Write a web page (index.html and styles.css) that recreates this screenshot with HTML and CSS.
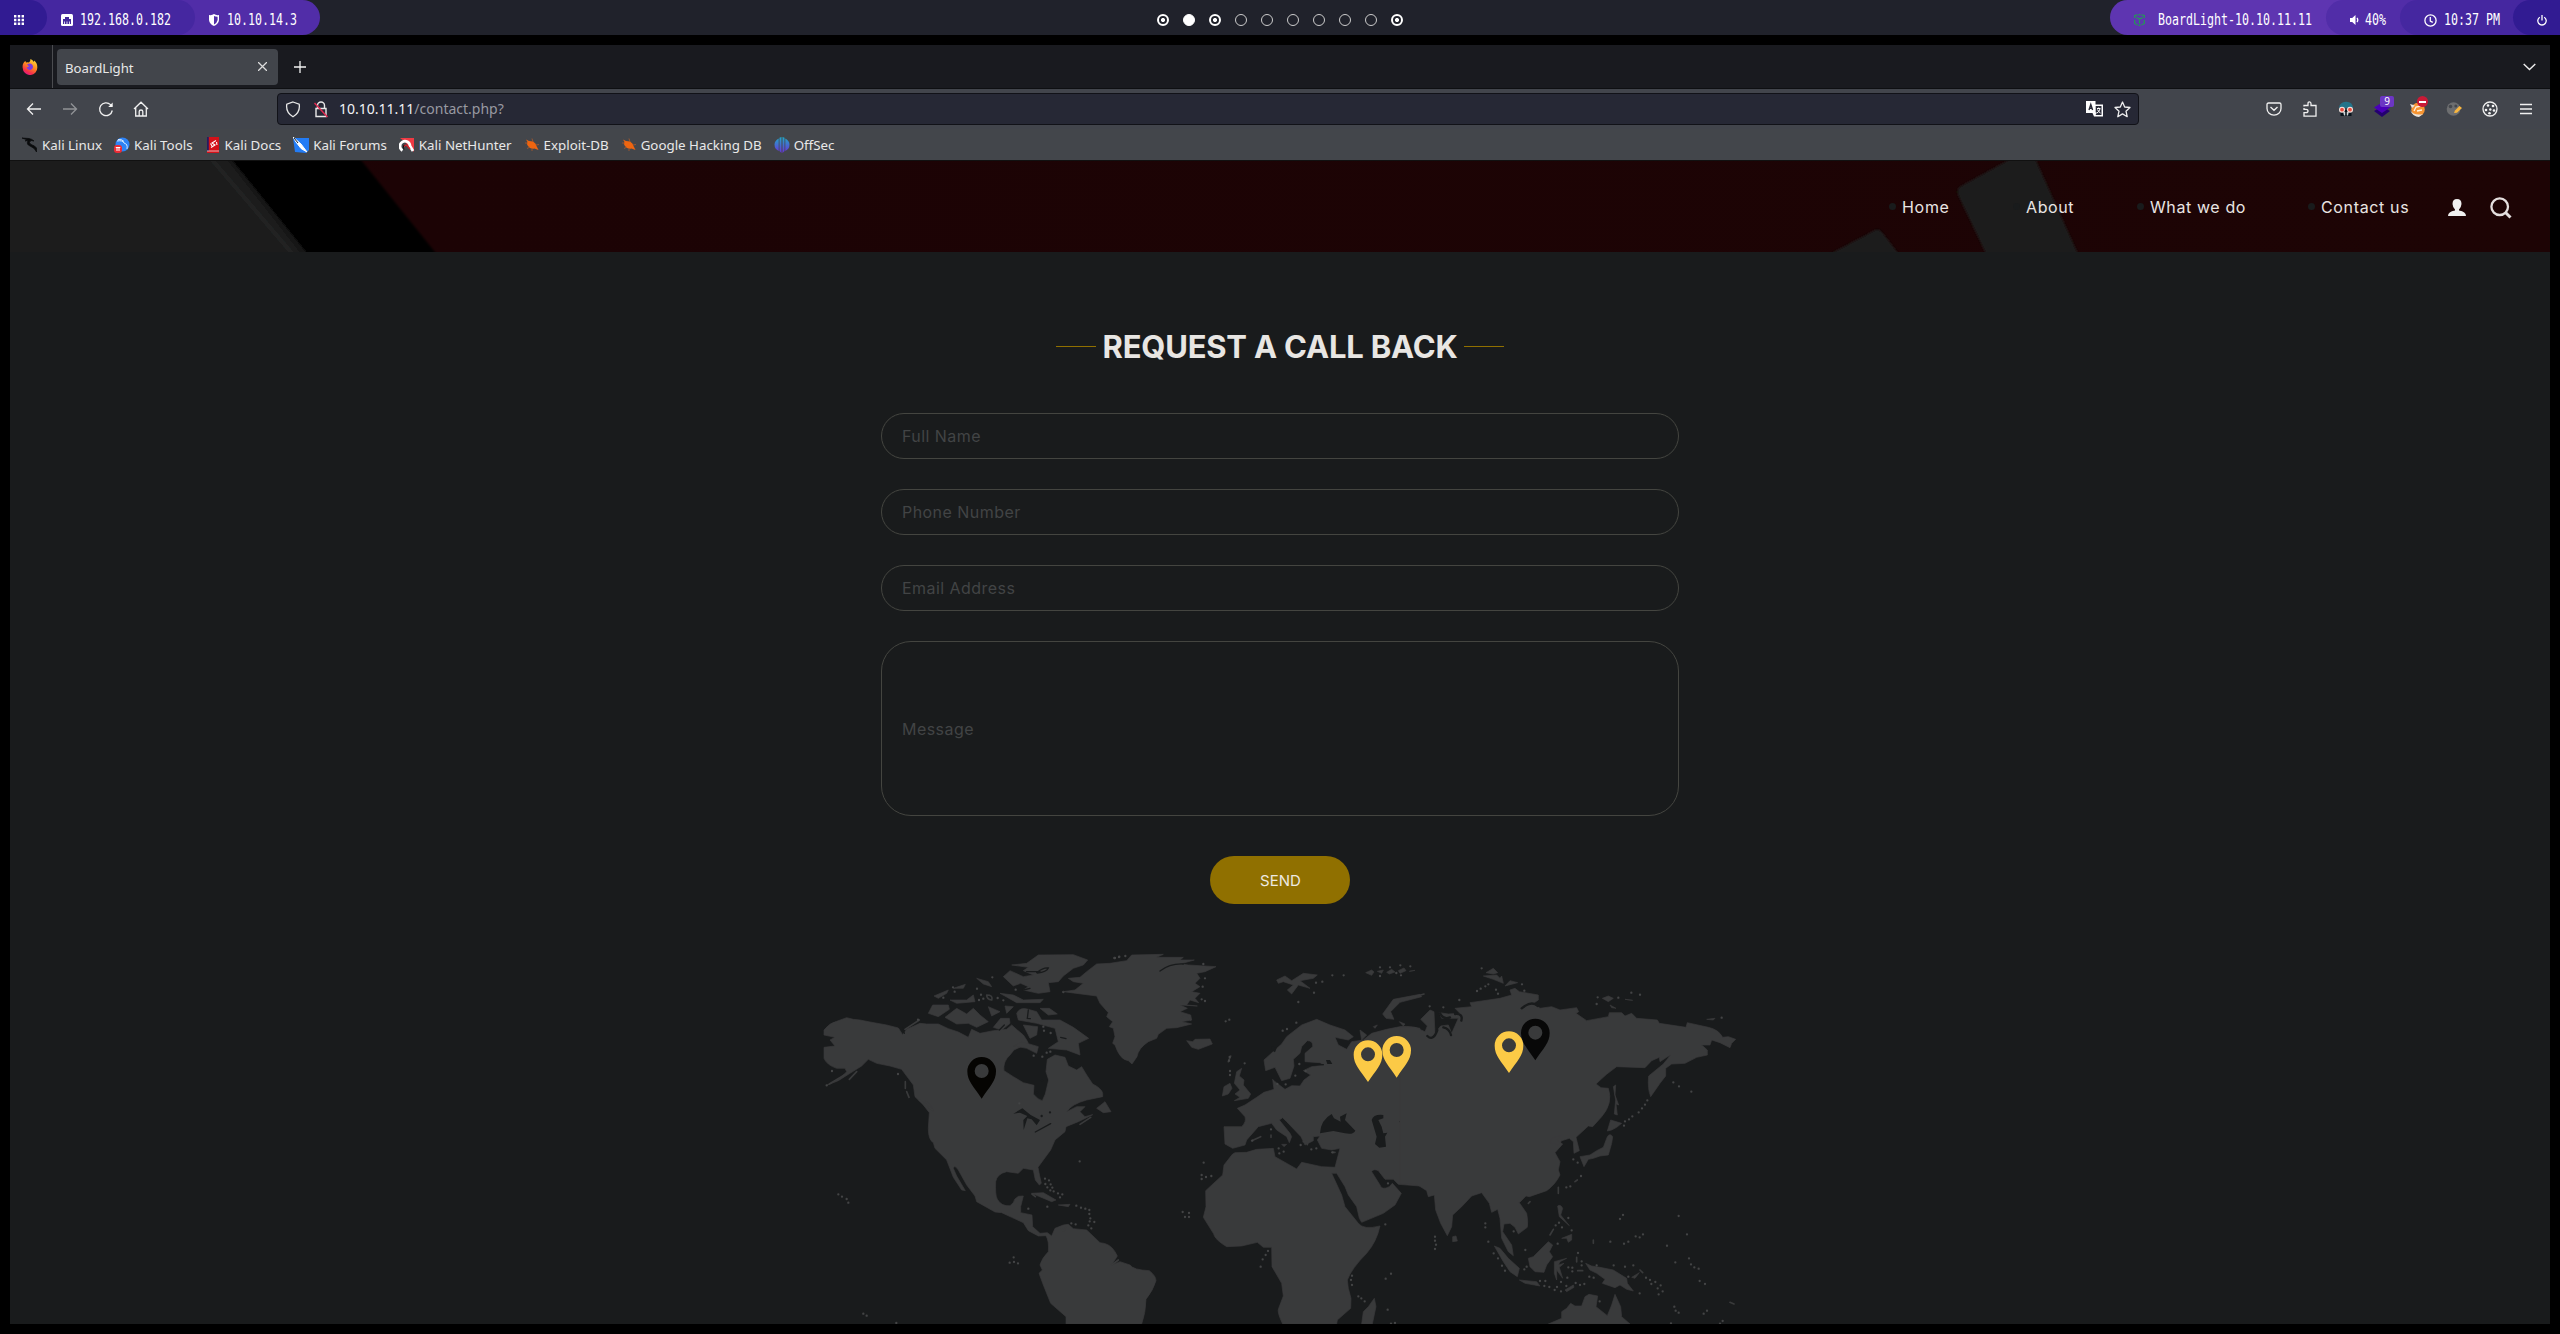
FILE: index.html
```html
<!DOCTYPE html>
<html lang="en">
<head>
<meta charset="utf-8">
<title>BoardLight</title>
<link rel="stylesheet" href="styles.css">
</head>
<body>
<header class="bar">
  <div class="bar-group bar-left">
    <div class="seg seg-apps"><svg width="10" height="10" viewBox="0 0 10 10" fill="#fff"><path d="M0 0h2.4v2.4H0zM3.8 0h2.4v2.4H3.8zM7.6 0H10v2.4H7.6zM0 3.8h2.4v2.4H0zM3.8 3.8h2.4v2.4H3.8zM7.6 3.8H10v2.4H7.6zM0 7.6h2.4V10H0zM3.8 7.6h2.4V10H3.8zM7.6 7.6H10V10H7.6z"/></svg></div>
    <div class="seg seg-lan">
      <svg width="12" height="12" viewBox="0 0 12 12"><rect width="12" height="12" rx="1.5" fill="#fff"/><path d="M2 10V5h2V3h4v2h2v5H8.800V7.500H8V10H6.400V7.500H5.600V10H4V7.500H3.200V10z" fill="#43289b"/></svg>
      <svg class="mono" width="92" height="20"><text x="0" y="15" textLength="91" lengthAdjust="spacingAndGlyphs">192.168.0.182</text></svg>
    </div>
    <div class="seg seg-vpn">
      <svg width="10" height="12" viewBox="0 0 10 12"><path d="M0 1Q3 1.500 5 0Q7 1.500 10 1V6Q9.500 10 5 12Q.5 10 0 6z" fill="#fff"/><path d="M5 2Q6.500 2.800 8.600 2.700V6Q8 9 5 10.500z" fill="#512da8"/></svg>
      <svg class="mono" width="70" height="20"><text x="0" y="15" textLength="70" lengthAdjust="spacingAndGlyphs">10.10.14.3</text></svg>
    </div>
  </div>
  <div class="desks">
    <i class="desk busy"></i><i class="desk active"></i><i class="desk busy"></i><i class="desk"></i><i class="desk"></i><i class="desk"></i><i class="desk"></i><i class="desk"></i><i class="desk"></i><i class="desk busy"></i>
  </div>
  <div class="bar-group bar-right">
    <div class="seg seg-target">
      <svg width="11" height="12" viewBox="0 0 11 12" fill="none" stroke="#229a55" stroke-width="1.200"><path d="M.7 4V1.500L3.500.8M7.500.8L10.300 1.500V4M.7 6V9.500L3.500 11M10.300 6V9.500L7.500 11M4.500 11.300H6.500M2.300 3.500L5.500 5 8.700 3.500M5.500 5V9.500M4.500.7H6.500"/></svg>
      <svg class="mono" width="154" height="20"><text x="0" y="15" textLength="154" lengthAdjust="spacingAndGlyphs">BoardLight-10.10.11.11</text></svg>
    </div>
    <div class="seg seg-vol">
      <svg width="9" height="10" viewBox="0 0 9 10"><path d="M0 3h2.200L5.500 0v10L2.200 7H0z" fill="#fff"/><path d="M7 3q1.500 2 0 4" fill="none" stroke="#fff" stroke-width="1.300"/></svg>
      <svg class="mono" width="21" height="20"><text x="0" y="15" textLength="21" lengthAdjust="spacingAndGlyphs">40%</text></svg>
    </div>
    <div class="seg seg-clock">
      <svg width="13" height="13" viewBox="0 0 13 13" fill="none" stroke="#fff" stroke-width="1.300"><circle cx="6.500" cy="6.500" r="5.600"/><path d="M6.300 3v4l2.500 1.300"/></svg>
      <svg class="mono" width="56" height="20"><text x="0" y="15" textLength="56" lengthAdjust="spacingAndGlyphs">10:37 PM</text></svg>
    </div>
    <div class="seg seg-power"><svg width="10" height="11" viewBox="0 0 10 11" fill="none" stroke="#fff" stroke-width="1.300"><path d="M2.800 2.200a4.200 4.200 0 1 0 4.400 0M5 0v5.500"/></svg></div>
  </div>
</header>

<div class="window">
  <div class="tabs">
    <div class="pinned">
      <svg width="16" height="16" viewBox="0 0 16 16"><defs><linearGradient id="fox" x1=".8" y1="0" x2=".3" y2="1"><stop offset="0" stop-color="#ffe13a"/><stop offset=".45" stop-color="#ff8a1f"/><stop offset=".8" stop-color="#f5304a"/><stop offset="1" stop-color="#e31587"/></linearGradient></defs><path d="M1 5Q2 2.500 3.500 2L4 3.500Q6 3 7 3.500Q8.500 2.500 8.500 0Q11 1 11.700 3Q12 2 12 1.500Q15.500 4 15.300 8.500A7.300 7.300 0 0 1 .7 9Q.4 7 1 5z" fill="url(#fox)"/><path d="M5 5.500Q8 3.500 10.500 6Q12 9 9 10.800Q5.500 11.500 4.600 8.500L7 7.500z" fill="#7a3ae0"/></svg>
    </div>
    <div class="tab"><span>BoardLight</span><svg width="9" height="9" viewBox="0 0 8 8" stroke="#ddd" stroke-width="1.100"><path d="M0 0l8 8M8 0L0 8"/></svg></div>
    <svg class="newtab" width="12" height="12" viewBox="0 0 12 12" stroke="#f2f2f2" stroke-width="1.300"><path d="M6 0v12M0 6h12"/></svg>
    <svg class="alltabs" width="13" height="8" viewBox="0 0 13 8" fill="none" stroke="#eee" stroke-width="1.400"><path d="M.7 1l5.800 5.500L12.300 1"/></svg>
  </div>
  <div class="tools">
    <div class="nav-icons">
      <svg viewBox="0 0 16 16"><path d="M15 8H1.500M7 2.500L1.500 8 7 13.500"/></svg>
      <svg viewBox="0 0 16 16" class="dim"><path d="M1 8h13.500M9 2.500L14.500 8 9 13.500"/></svg>
      <svg viewBox="0 0 16 16"><path d="M14.300 9.500A6.400 6.400 0 1 1 12.500 3.600L14 5"/><path d="M14.700 1.500V6h-4.500z" fill="#f5f5f5" stroke="none"/></svg>
      <svg viewBox="0 0 16 16"><path d="M1 8L8 1.200 15 8M2.700 6.500V15H13.300V6.500M6.200 15V10.500Q6.200 9 8 9T9.800 10.500V15"/></svg>
    </div>
    <div class="url">
      <svg width="16" height="17" viewBox="0 0 16 17" fill="none" stroke="#e8e8e8" stroke-width="1.300"><path d="M8 1L14.200 3.200Q15.500 11.500 8 15.800Q.5 11.500 1.800 3.200z"/></svg>
      <svg class="lock" width="14" height="17" viewBox="0 0 14 17" fill="none" stroke="#e8e8e8" stroke-width="1.400"><path d="M3.500 7V4.500a3.500 3.500 0 0 1 7 0V7M2 7.500H12V15.500H2z"/><path d="M.5 2L13.500 16" stroke="#e22850" stroke-width="1.500"/></svg>
      <span class="address">10.10.11.11<span class="path">/contact.php?</span></span>
      <svg width="18" height="16" viewBox="0 0 18 16"><path d="M0 0H9.500V3.500H17V15.500H8L6.500 12H0z" fill="#fff"/><path d="M9.700 5H15.500V14H9.500L11 11.500H9.700z" fill="#272936"/><path d="M3 9L4.800 3.500 6.600 9M3.600 7.300H6" fill="none" stroke="#272936" stroke-width="1.400"/><path d="M11 7.500H14.500M12.700 6.500V7.500M14 8Q13 11 11 12M11.500 8.500Q12.500 11 14.500 12" fill="none" stroke="#fff"/></svg>
      <svg class="star" width="17" height="17" viewBox="0 0 17 17" fill="none" stroke="#eee" stroke-width="1.300" stroke-linejoin="round"><path d="M8.500 1L10.700 6 16 6.500 12 10.200 13.200 15.700 8.500 12.900 3.800 15.700 5 10.200 1 6.500 6.300 6z"/></svg>
    </div>
    <div class="addons">
      <svg viewBox="0 0 16 16"><path d="M2.500 2H13.500Q15 2 15 3.500V7.500A7 6.700 0 0 1 1 7.500V3.500Q1 2 2.500 2zM4.500 6L8 9.300 11.500 6"/></svg>
      <svg viewBox="0 0 16 16"><path d="M2 5.500V4.500H6V2.700Q6 .8 7.500 .8T9 2.700V4.500H14V15.200H2V11.700H4Q6 11.700 6 10T4 8.300H2V7"/></svg>
      <svg viewBox="0 0 16 16"><g stroke="none"><path d="M1 7Q1.500 1 8 .8T15 7z" fill="#24748a"/><path d="M2.500 9H13.500V15H2.500z" fill="#08131b"/><path d="M5.200 11H10.800L10 14.500H6z" fill="#cfd5d8"/><path d="M7.200 10H8.800V15H7.200z" fill="#10181e"/><circle cx="4" cy="8.700" r="3" fill="#f7e8e2"/><circle cx="12" cy="8.700" r="3" fill="#f7e8e2"/><circle cx="4" cy="8.700" r="1.900" fill="#e94d3e"/><circle cx="12" cy="8.700" r="1.900" fill="#e94d3e"/></g></svg>
      <div class="badged"><svg viewBox="0 0 16 16"><g stroke="none"><path d="M0 10L8 5.500 16 10 8 16z" fill="#240070"/><path d="M0 6.500L8 1.500 16 6.500 8 12z" fill="#4a00b8"/></g></svg><b class="count">9</b></div>
      <div class="badged"><svg viewBox="0 0 16 16"><g stroke="none"><circle cx="8" cy="8.500" r="6.800" fill="#f69432"/><path d="M0 3L5 4.500 2 7zM0 9Q4 15 13 13L9 16Q3 16 0 9z" fill="#e6e2dc"/></g><path d="M4 10L6 6 11 5M7 10L12 9" stroke="#fff2e0"/></svg><b class="blocked"></b></div>
      <svg viewBox="0 0 16 16"><g stroke="none"><circle cx="7.500" cy="8" r="6.800" fill="#6d6e70"/><circle cx="4.500" cy="5.500" r="1.800" fill="#45484d"/><circle cx="9.800" cy="5" r="1.500" fill="#45484d"/><path d="M8 12L9 9.500 13.500 5 16 7 11 11.700z" fill="#f9b63f"/></g></svg>
      <svg viewBox="0 0 16 16"><circle cx="8" cy="8" r="7"/><g stroke="none" fill="#f5f5f5"><circle cx="6" cy="4.500" r="1.300"/><circle cx="11" cy="5" r="1.300"/><circle cx="4" cy="9" r="1.300"/><circle cx="8.300" cy="8.500" r="1.200"/><circle cx="12" cy="9.500" r="1.300"/><circle cx="7.500" cy="12.300" r="1.300"/></g></svg>
      <svg viewBox="0 0 16 16"><path d="M2 3.500H14M2 8H14M2 12.500H14"/></svg>
    </div>
  </div>
  <nav class="bookmarks">
    <a><svg viewBox="0 0 16 16"><path d="M0 1L7 1.500Q10 2 12 4L9 3.500Q6 5.500 9 7.500Q13 8.500 14.500 11L14.500 15Q13 11 8 9Q4 7.500 6 3.500L3 4L5 2.800z" fill="#090a0b" stroke="#090a0b" stroke-width=".7"/></svg><span>Kali Linux</span></a>
    <a><svg viewBox="0 0 16 16"><circle cx="8.500" cy="7.500" r="7" fill="#2e83f5"/><path d="M3 4Q9 3 10 6Q14 7 13 12M4 2.500Q8 2 10 4.500" stroke="#d9ebff" fill="none"/><rect y="8" width="8" height="8" rx="3" fill="#ec2b35"/><path d="M1.800 10.500h4.500M3 10.500V14M5 10.500V14" stroke="#fff" fill="none"/></svg><span>Kali Tools</span></a>
    <a><svg viewBox="-2 0 16 16"><path d="M0 0H12V16H0z" fill="#d31119"/><path d="M0 0H1.800V14H0z" fill="#271b60"/><path d="M0 14H12" stroke="#f2d9d9" stroke-width=".8"/><path d="M9 3.500L5 6 8 8 4 10.500M3.500 6.500L5 9M9.500 5L10 8" fill="none" stroke="#fff" stroke-width="1.100"/></svg><span>Kali Docs</span></a>
    <a><svg viewBox="0 0 16 16"><path d="M0 1H16V13L13 16 2 15z" fill="#237cf5"/><path d="M0 0L8 7 14 15 8 11.500 3 5z" fill="#fff" stroke="#fff"/><path d="M1 1L5 6" stroke="#17212d"/></svg><span>Kali Forums</span></a>
    <a><svg viewBox="0 0 16 16"><path d="M1 1H15V15L5 4z" fill="#f03a43"/><path d="M3.500 13.500A5 5 0 1 1 11 9L14 14" fill="none" stroke="#fff" stroke-width="2.800"/><path d="M5 10Q5 7.500 8 8.500L11 12" fill="none" stroke="#d5202a" stroke-width="1.500"/><path d="M5 12.500Q3.500 10 5 8" fill="none" stroke="#111"/></svg><span>Kali NetHunter</span></a>
    <a><svg viewBox="0 0 16 16"><path d="M2 2.500L5 4 9 4.500Q12 6 12.500 9L14.500 13 10.500 11.500Q6 12.500 4 9Q2 6 3.500 5z" fill="#ee6510"/><path d="M1 6H4M8 1.500L9 5M12 8L15 7.500M3 11.500L6 10M8 14L8 11" stroke="#ad592a" stroke-width=".8"/></svg><span>Exploit-DB</span></a>
    <a><svg viewBox="0 0 16 16"><path d="M2 2.500L5 4 9 4.500Q12 6 12.500 9L14.500 13 10.500 11.500Q6 12.500 4 9Q2 6 3.500 5z" fill="#ee6510"/><path d="M1 6H4M8 1.500L9 5M12 8L15 7.500M3 11.500L6 10M8 14L8 11" stroke="#ad592a" stroke-width=".8"/></svg><span>Google Hacking DB</span></a>
    <a><svg viewBox="0 0 16 16"><defs><linearGradient id="off" gradientUnits="userSpaceOnUse" x1="0" y1="0" x2="0" y2="16"><stop offset="0" stop-color="#20a9c8"/><stop offset="1" stop-color="#6930d8"/></linearGradient></defs><path d="M7.500 0V16L5.500 14V.8zM8.500 0V16L10.500 14V.8zM4.700 1.500V14Q.5 12 .5 7.500Q.5 4 4.700 1.500zM11.300 1.500V14Q15.500 12 15.500 7.500Q15.500 4 11.300 1.500z" fill="url(#off)"/></svg><span>OffSec</span></a>
  </nav>

  <main class="page">
    <div class="hero">
      <svg class="hero-art" viewBox="10 161 2540 91" preserveAspectRatio="none">
        <defs><filter id="soft"><feGaussianBlur stdDeviation="1"/></filter><linearGradient id="red"><stop offset="0" stop-color="#210004"/><stop offset=".15" stop-color="#1c0305"/><stop offset="1" stop-color="#1d0405"/></linearGradient></defs>
        <path d="M10 161H2550V252H10z" fill="url(#red)"/>
        <g filter="url(#soft)"><path d="M0 150H353L443 262H0z" fill="#000"/><path d="M0 150H224L314 262H0z" fill="#1a1a1a"/><path d="M208 155L296 258" stroke="#202121" stroke-width="5"/><path d="M222 150L310 262" stroke="#141414" stroke-width="3"/>
        <path d="M2012 158H2035L2079 256H1987L1958 195Q1956 189 1961 186z" fill="#1d1e1d"/><path d="M1826 256L1875 230Q1879 228 1882 232L1902 258z" fill="#1d1e1d"/></g>
      </svg>
      <nav class="site-nav">
        <a class="n1">Home</a><a class="n2">About</a><a class="n3">What we do</a><a class="n4">Contact us</a>
        <svg class="user" width="18" height="17" viewBox="0 0 18 17"><path d="M9 0Q13.500 0 13.500 5Q13.200 8.500 11 10.500V11.500Q18 12.500 18 17H0Q0 12.500 7 11.500V10.500Q4.800 8.500 4.500 5Q4.500 0 9 0z" fill="#f0f0f0"/></svg>
        <svg class="search" width="22" height="22" viewBox="0 0 22 22" fill="none" stroke="#e4dfdf"><circle cx="9.700" cy="9.700" r="8.300" stroke-width="2.300"/><path d="M15.500 15.500L20.500 20.500" stroke-width="3"/></svg>
      </nav>
    </div>
    <section class="contact">
      <h2>REQUEST A CALL BACK</h2>
      <form class="form">
        <input type="text" placeholder="Full Name">
        <input type="text" placeholder="Phone Number">
        <input type="text" placeholder="Email Address">
        <input type="text" class="message" placeholder="Message">
        <button type="button">SEND</button>
      </form>
      <svg class="map" width="920" height="384" viewBox="820 940 920 384">
        <defs><path id="pin" fill-rule="evenodd" d="M0 0C-24 -36 -43 -53 -43 -82A43 43 0 0 1 43 -82C43 -53 24 -36 0 0zM0 -104A21 21 0 1 0 0 -62A21 21 0 1 0 0 -104z"/></defs>
        <g transform="translate(810 940) scale(.33333)">
          <g class="land">
            <path d="M42 270Q60 248 80 244L110 233 130 238 150 240 180 246 230 255 265 264 278 284 290 268 330 250 350 252 385 252 415 266 445 276 475 292 485 268 510 280 550 272 590 268 605 255 622 270 640 285 650 300 655 310 612 330 600 345 Q578 365 582 392L610 410 640 428 672 436 670 462 Q685 480 697 482L706 462 716 420 708 395 712 358 735 345 765 352 775 378 800 390 815 380 830 405 848 432Q875 445 878 460L878 470 830 480Q785 492 770 515L800 500 825 500 810 515 825 530 848 524 805 545 768 560 765 575 735 600 722 630 700 660 684 682Q688 705 694 730L688 735 676 720 670 690 640 685 625 700 590 695Q560 702 557 725Q555 765 562 778Q575 800 600 797Q612 790 614 778L625 769 640 768 632 800 632 818 666 825 668 860 690 880 712 878 725 888 735 865 760 855 775 853 790 866 830 870 870 908Q900 910 915 935L922 948 905 975 930 965 960 975Q970 990 1018 992Q1038 1008 1038 1022Q1030 1050 1008 1078Q1007 1120 995 1152H768V1130L722 1090 700 1035 687 1000 697 990 690 975Q695 955 715 935Q718 905 708 887L685 888 655 872 640 848 605 832 575 818 555 816 500 785 495 768 470 735 445 690Q432 672 430 685L440 708 466 752 455 750 430 712 410 660 375 625 370 608Q355 600 355 565L358 518 340 495 315 470 310 435 295 415 275 388 240 378 200 370 175 358 155 378 120 400 85 422 50 436 90 415 110 395 105 385 80 385Q50 375 42 355V322L75 318 60 300 75 292 42 285z"/>
            <path d="M605 75L650 70 685 45 790 44 833 60 820 75 790 85 760 108 745 125 715 128 720 155 685 160 640 150 655 140 632 130 610 138 580 110 600 92 640 110 670 105 640 92 655 82zM570 160L610 165 640 180 700 178 690 188 620 188zM372 168L415 150 410 160 385 175zM430 145L466 133 460 145zM500 115L535 125 545 140 520 132zM355 220L368 195 415 195 418 208 385 230zM405 232L440 205 470 222 490 205 510 225 535 245 500 262 475 250 440 252zM420 180L470 180 490 165 495 185 440 190zM535 200L570 215 545 228zM585 198L610 200 590 220zM572 235L598 235 600 250 575 270 550 262zM620 220Q630 200 655 208L680 215 695 240 750 240 790 262 836 295 805 310 810 345 770 330 715 325 745 305 735 265 680 250 625 240zM690 205L718 205 742 222 715 225zM640 255L683 260 680 285 660 295zM612 318L635 305 685 320 680 340 650 325zM665 760L700 758 738 780 725 785zM745 795L780 793 775 800zM860 505L885 485 903 515 880 518zM345 480L365 498 370 515 350 500z"/>
          </g>
          <g class="cut"><path d="M610 521L637 505 662 525 690 540 680 556 665 538 652 535 641 570 640 540 652 528 630 518z"/></g>
          <g class="cutline"><path d="M278 262L283 280M655 210L652 235 661 236M680 98Q700 82 715 84Q710 96 682 99M676 576L722 551M650 95H690M640 150L660 145M568 270L583 255M752 292L768 296"/></g>
          <g class="coast"><path d="M285 268L328 240M58 432L103 405M118 418L140 395M286 425V445M290 455L297 472M328 480L368 510M530 165Q550 165 545 180Q530 178 530 165M666 762L676 770M810 553L842 532M755 866Q762 880 766 862"/></g>
          <path class="dots" d="M66 393h0M50 436h0M264 402h0M324 239h0M628 490h0M809 664h0M85 763h0M96 770h0M110 777h0M115 788h0M599 968h0M611 952h0M612 966h0M624 970h0M160 1121h0M170 1127h0M259 1149h0M705 716h0M717 721h0M706 732h0M722 733h0M712 742h0M727 743h0M721 751h0M731 754h0M744 760h0M757 763h0M750 772h0M655 806h0M712 800h0M799 797h0M813 803h0M826 806h0M838 810h0M838 822h0M841 835h0M839 844h0M853 846h0M835 856h0M844 865h0M784 850h0M797 853h0M429 142h0M434 155h0M400 173h0M501 146h0M513 164h0M507 180h0M520 176h0M547 112h0M563 174h0M580 181h0M617 149h0M700 260h0M702 272h0M722 279h0M710 338h0M721 335h0M697 350h0M671 347h0M760 156h0M915 54h0M928 50h0M946 48h0"/>
          <path class="dots cutdots" d="M696 421h0M788 371h0M681 458h0M720 517h0M695 528h0"/>
        </g>
        <g transform="translate(1100 940) scale(.33333)">
          <g class="land">
            <path d="M-110 155L-75 150-50 130-80 125-95 115-60 112-40 95-10 72 30 70 80 62 95 45 190 43 170 52 250 52 240 60 283 60 240 72 265 75 348 80 315 95 290 100 300 115 285 130 300 140 275 155 300 160 285 175 296 188 270 180 260 195 292 198 240 195 262 205 240 215 272 225 275 240 245 245 275 252 230 263 200 265 175 283 170 295 145 305Q115 325 111 350L96 372 85 362Q60 360 45 315L38 310 45 290 40 265 28 260 38 245 20 230 25 218 0 190-10 168z"/>
            <path d="M260 302L278 305 285 298 330 297 337 312 295 328 275 322zM530 120L555 108 575 122 610 100 652 105 640 115 600 122 630 145 595 135 575 162 562 150 580 135 550 125 535 130zM848 222L880 178 960 163 965 170 900 187 872 215 882 238 858 235zM780 270L800 285 785 300zM820 260L832 255 825 265zM898 245L915 252 910 258zM410 395L425 385 418 408 432 420 430 435 452 462 445 475 403 482 420 472 405 462 420 450 403 430zM372 440L390 430 396 445 385 462 367 468zM545 613L560 613 552 620zM785 1152L790 1115 805 1100 823 1075 828 1100 817 1152zM797 98L815 90 822 96 815 106zM832 94L850 90 845 100zM860 97L875 88 885 96 868 102zM895 92L912 84 918 92 900 100zM928 94L945 91z"/>
            <path d="M412 505L435 495 470 472 492 457 522 448 518 418 525 425 555 448 575 437 600 438 612 420 632 405 610 392 635 380 672 375 660 368 615 365 615 340 638 320Q640 302 622 302L605 320 600 340 580 358 582 378 570 415 545 422 525 382 497 392 492 360 545 312 560 290 605 255 650 238 690 255 735 270 760 290 745 300 705 292 715 315 740 328 755 305 790 300 815 280 860 268 890 262Q915 255 960 265L960 738 895 733 880 718 855 718 835 692Q820 685 815 695L840 735Q845 752 868 740L877 730 904 760 885 795 850 820 785 847 778 835 770 800 745 765 735 740 710 700 695 700 725 765 735 800 775 850Q790 870 840 858Q830 905 800 940Q755 985 742 1020L745 1045 753 1075 752 1105 712 1140 710 1152H548Q530 1115 536 1105L550 1068 545 1030 516 980 515 922 490 922 472 907 425 918 380 920Q345 900 340 880L310 832 318 800 317 752 368 705 372 675 397 643 405 638 440 637 470 628 520 625 525 650 590 687 605 667 665 680 705 682 720 625 695 630 665 625 652 600 660 588 640 590 640 602 615 615 603 590 560 545 548 533 538 540 570 580 575 590 568 608 560 590 530 570 515 550 475 560 440 600 435 615 398 625 375 612 372 560 425 560Q440 545 435 530z"/>
          </g>
          <g class="cut"><path d="M660 580Q662 540 695 522L702 535 722 545 720 530 740 520 735 540 766 572Q760 585 735 580L700 573zM815 540Q820 522 850 525L850 535 835 540 845 560 850 580 862 578 855 590 858 620 838 623 825 612 830 590zM898 545L908 530 912 540 905 552zM678 360L690 360 697 372 682 372zM516 318L530 325 525 337 514 330z"/></g>
          <g class="cutline"><path d="M615 375L670 374M180 93Q210 70 250 72"/></g>
          <g class="coast"><path d="M385 365L392 348M455 602L482 590M513 585V592M695 637H705M35 975L55 960M245 232Q265 220 272 240M610 605Q625 600 622 614"/></g>
          <path class="dots" d="M43 54h0M57 51h0M310 72h0M315 115h0M308 140h0M305 178h0M315 183h0M377 244h0M388 239h0M389 351h0M387 362h0M434 370h0M390 393h0M390 405h0M311 668h0M305 705h0M305 717h0M318 711h0M334 708h0M248 816h0M267 819h0M255 831h0M267 831h0M504 933h0M497 945h0M488 958h0M482 980h0M595 186h0M642 158h0M648 128h0M667 125h0M697 106h0M731 106h0M548 272h0M561 267h0M589 248h0M513 568h0M457 602h0M536 625h0M551 635h0M538 640h0M602 615h0M634 628h0M649 625h0M698 637h0M532 432h0M557 433h0M586 407h0M598 372h0M617 393h0M856 853h0M873 1001h0M857 1016h0M756 1007h0M753 1020h0M756 1035h0M775 1069h0M784 1075h0M794 1084h0M863 1109h0M885 1149h0M873 1151h0M864 730h0M840 82h0M870 82h0M901 76h0M931 79h0M903 106h0M840 108h0M889 99h0"/>
        </g>
        <g transform="translate(1400 940) scale(.33333)">
          <g class="land">
            <path d="M0 262L45 262 75 275 82 258 62 238 90 210 102 215 105 280 122 258 145 255 155 280 175 235 125 235 118 218 145 222 180 220 165 205 215 200 210 188 300 175 335 165 330 150 345 145 358 155 415 165 415 180 400 190 420 205 455 200 480 210 530 203 536 215 528 220 560 242 625 230 628 218 665 218 675 228 695 220 710 235 772 240 778 250 858 262 862 248 925 262Q955 268 968 292L985 290 1007 298 995 310 990 323 960 308 935 300 930 315 905 315 922 330 922 345 890 352 855 370 815 372 797 385 797 408 780 430 752 470Q742 445 746 408L790 372 812 345 800 352 780 365 778 352 755 362 735 383 650 380Q620 400 588 432L603 443 625 445Q640 490 605 530L578 560 565 558 528 592 538 632 522 640 520 605 508 595 485 602 475 615 450 608 455 595 485 585 470 600 488 612 465 638 480 665 475 690 480 705Q465 735 440 752L388 770 378 768 358 788 380 820Q385 845 382 862L355 882 345 862 330 850 312 852 308 875 335 915 340 947 325 935 305 895 300 835 293 808 275 817 268 790 245 758 215 768 185 800 158 825 155 860 142 887 122 850 107 810 103 765 85 770 80 752 50 733 0 730z"/>
            <path d="M258 98L280 85 293 98 280 102zM250 108L290 105 300 115 305 108 310 130 280 118zM315 138L330 122 353 128zM607 175L625 168 640 175 625 185zM630 195L648 205 635 203zM675 178L698 181zM920 238L945 235 940 240zM640 440L647 435 645 465 656 495 648 492 652 525 643 522 647 480zM632 540L665 550 650 562 635 570 622 573zM622 590Q630 578 638 590L635 610 625 645 600 648 580 655 565 658 552 680 540 650 570 645 590 632 610 622zM473 798Q482 792 488 805L482 825 508 857 478 830zM485 895L515 883 515 900 505 907 500 895zM158 890L168 888 172 903 158 905zM283 918L300 925 325 955 358 985 352 1010 330 995 310 965zM358 1020L410 1025 420 1038 375 1030zM385 955L400 950 445 905 458 915 448 935 458 950 440 975 432 997 405 995 390 980zM463 965L500 955 480 965 475 975 492 970 478 982 488 1015 470 990 470 1020 463 1000zM557 970L575 978 600 982 640 990 680 1015 682 1030 700 1053 680 1048 660 1035 645 1043 607 1030 615 1018 590 1000 570 990zM445 1152L485 1135 485 1115 500 1105 512 1090 525 1098 545 1098 555 1070 567 1063 593 1068 588 1100 622 1127 635 1095 645 1063 662 1100 665 1130 690 1152zM495 1050L520 1035 522 1042 500 1055zM695 1012L718 998 705 1015z"/>
          </g>
          <g class="cutline"><path d="M82 288Q100 305 112 270M165 222Q190 220 184 242M120 220Q130 240 150 232M130 262Q148 265 153 285M365 205Q395 180 413 198" stroke-width="7"/></g>
          <g class="coast"><path d="M475 742V760M460 868L450 885M580 900V910M530 952V966M0 183L72 162M720 990L728 998M525 725L532 720M385 790L390 785M990 1087L1002 1092M533 992H548"/></g>
          <path class="dots" d="M245 85h0M231 153h0M242 146h0M256 139h0M265 133h0M288 149h0M294 161h0M366 133h0M373 152h0M178 180h0M89 199h0M130 202h0M593 172h0M590 192h0M694 158h0M720 164h0M655 173h0M965 233h0M820 427h0M837 439h0M874 455h0M742 481h0M735 494h0M726 505h0M716 517h0M697 529h0M687 538h0M675 544h0M672 557h0M520 658h0M533 668h0M543 708h0M499 742h0M511 739h0M256 850h0M256 862h0M265 905h0M105 890h0M105 902h0M108 914h0M105 927h0M341 874h0M376 930h0M281 940h0M294 955h0M306 977h0M315 992h0M373 988h0M380 980h0M467 856h0M477 848h0M486 862h0M505 834h0M515 871h0M473 911h0M631 905h0M672 911h0M685 905h0M707 889h0M719 892h0M729 883h0M669 825h0M660 837h0M836 828h0M861 883h0M801 917h0M826 967h0M867 955h0M873 973h0M883 982h0M896 986h0M899 1023h0M915 1032h0M534 939h0M545 964h0M545 976h0M505 982h0M517 983h0M517 994h0M502 1013h0M568 1010h0M581 1013h0M590 976h0M641 976h0M675 980h0M700 976h0M685 1010h0M738 1013h0M750 1020h0M754 1032h0M766 1026h0M773 1045h0M782 1036h0M788 1054h0M776 1063h0M719 1060h0M420 1023h0M436 1023h0M433 1038h0M448 1041h0M464 1050h0M471 1041h0M483 1026h0M483 1054h0M499 1038h0M527 1029h0M540 1035h0M553 1032h0M599 1084h0M823 1100h0M827 1112h0M836 1118h0M911 1121h0M921 1112h0M968 1143h0M960 1151h0M813 1150h0"/>
          <use href="#pin" x="406" y="361" fill="#080808"/><use href="#pin" x="327" y="399" fill="#fcca46"/>
          <use href="#pin" x="-96" y="426" fill="#fcca46"/><use href="#pin" x="-10" y="413" fill="#fcca46"/>
          <use href="#pin" x="-1255" y="476" fill="#050402"/>
        </g>
      </svg>
    </section>
  </main>
</div>
</body>
</html>
```
FILE: styles.css
```css
* { box-sizing: border-box; }
html, body { margin: 0; height: 1334px; overflow: hidden; background: #000; }
body { font-family: "Noto Sans", sans-serif; color: #e8e8e8; }
svg { display: block; flex: none; }

.bar { display: flex; justify-content: space-between; height: 35px; background: #20222b; }
.bar-group { display: flex; width: 450px; }
.bar-right { justify-content: flex-end; }
.seg { display: flex; align-items: center; height: 35px; padding-top: 5px; position: relative; }
.bar-left .seg { border-radius: 0 18px 18px 0; }
.bar-right .seg { border-radius: 18px 0 0 18px; }
.seg-apps { width: 47px; padding-left: 14px; background: #311b92; z-index: 3; }
.seg-lan { width: 166px; margin-left: -18px; padding-left: 32px; gap: 7px; background: #4527a0; z-index: 2; }
.seg-vpn { width: 143px; margin-left: -18px; padding-left: 32px; gap: 8px; background: #512da8; z-index: 1; }
.seg-target { width: 234px; padding-left: 24px; gap: 13px; background: #5e35b1; }
.seg-vol { width: 92px; margin-left: -18px; padding-left: 24px; gap: 6px; background: #512da8; }
.seg-clock { width: 131px; margin-left: -18px; padding-left: 24px; gap: 7px; background: #4527a0; }
.seg-power { width: 47px; margin-left: -18px; padding-left: 24px; background: #311b92; }
.mono { font: 15px "DejaVu Sans Mono", monospace; fill: #fff; overflow: visible; }
.desks { display: flex; align-items: center; gap: 14px; padding-top: 5px; }
.desk { width: 12px; height: 12px; border: 1.5px solid #ccc; border-radius: 50%; }
.desk.active { background: #fff; border-color: #fff; }
.desk.busy { border: 2px solid #fff; background: radial-gradient(circle, #fff 1.6px, transparent 2.4px); }

.window { width: 2540px; height: 1279px; margin: 10px 10px 0; background: #191b1c; overflow: hidden; }
.tabs { display: flex; align-items: center; height: 44px; background: #191a1f; border-bottom: 1px solid #0e0f12; }
.pinned { display: flex; align-items: center; width: 43px; height: 43px; padding-left: 12px; border-right: 1px solid #4b4c50; }
.tab { display: flex; align-items: center; justify-content: space-between; width: 221px; height: 36px; margin-left: 4px; padding: 0 11px 0 8px; border-radius: 4px; background: #42454b; font-size: 13.2px; }
.tab span { padding-top: 2px; }
.newtab { margin-left: 16px; }
.alltabs { margin-left: auto; margin-right: 14px; }
.tools { display: flex; align-items: center; height: 40px; background: #42454c; }
.nav-icons { display: flex; gap: 19.8px; width: 267px; padding-left: 16px; }
.nav-icons svg, .addons svg { width: 16px; height: 16px; fill: none; stroke: #f0f0f0; stroke-width: 1.3; }
.nav-icons .dim { opacity: .45; }
.url { display: flex; align-items: center; width: 1862px; height: 32px; padding: 0 7px; background: #262835; border: 1px solid #111218; border-radius: 4px; }
.lock { margin-left: 13px; }
.address { flex: 1; padding: 0 0 1px 11px; font-size: 14px; color: #f2f2f5; }
.path { color: #9899a1; }
.star { margin-left: 10px; }
.addons { display: flex; gap: 20px; margin-left: auto; margin-right: 16px; }
.badged { position: relative; width: 16px; height: 16px; }
.count { position: absolute; left: 6px; top: -5px; width: 14px; height: 11px; background: #6c36c4; border-radius: 2px; color: #fff; font: 10px/11px "Noto Sans", sans-serif; text-align: center; }
.blocked { position: absolute; left: 7px; top: -5px; width: 11px; height: 11px; border-radius: 50%; background: linear-gradient(#fff, #fff) center / 7px 2px no-repeat #c91a36; }
.bookmarks { display: flex; align-items: center; height: 32px; padding: 0 0 0 12px; background: #43464b; border-bottom: 1px solid #111; font-size: 13.33px; white-space: nowrap; }
.bookmarks a { display: flex; align-items: center; gap: 4px; margin-right: 12px; }
.bookmarks svg { width: 16px; height: 16px; }

.page { font-family: Inter, sans-serif; }
.hero { position: relative; height: 91px; }
.hero-art { position: absolute; inset: 0; width: 100%; height: 91px; }
.site-nav { position: relative; display: flex; align-items: center; justify-content: flex-end; height: 93px; padding-right: 38px; font-size: 16px; color: #e9e5e3; }
.site-nav a { position: relative; top: -1px; white-space: nowrap; }
.site-nav a::before { content: ""; position: absolute; left: -13px; top: 6px; width: 7px; height: 7px; border-radius: 50%; background: #191b1c; }
.n1 { width: 124px; letter-spacing: .7px; }
.n2 { width: 124px; letter-spacing: .6px; }
.n3 { width: 171px; letter-spacing: .6px; }
.n4 { width: 127px; letter-spacing: .65px; }
.search { margin-left: 24px; }
.contact { display: flex; flex-direction: column; align-items: center; padding-top: 69px; }
h2 { display: flex; align-items: center; gap: 6px; height: 50px; margin: 0; padding-top: 1px; font-size: 31px; line-height: 50px; font-weight: 700; letter-spacing: -.2px; color: #e8e6e3; white-space: nowrap; }
h2::before, h2::after { content: ""; width: 40px; height: 1px; background: #907000; }
.form { display: flex; flex-direction: column; align-items: center; gap: 30px; width: 798px; margin-top: 42px; }
.form input { width: 798px; height: 46px; padding: 0 20px; border: 1px solid #444540; border-radius: 23px; background: transparent; font: 16px Inter, sans-serif; letter-spacing: .45px; outline: none; }
.form input::placeholder { color: #424445; opacity: 1; }
.form .message { height: 175px; border-radius: 30px; }
.form button { width: 140px; height: 48px; margin-top: 10px; padding: 0 0 0 1px; border: 0; border-radius: 24px; background: #907000; color: #eeeae2; font: 15px Inter, sans-serif; }
.map { margin-top: 36px; }
.land { fill: #393a3b; stroke: #393a3b; stroke-width: 2; stroke-linejoin: round; }
.cut { fill: #191b1c; }
.cutline { fill: none; stroke: #191b1c; stroke-width: 4; stroke-linecap: round; }
.coast { fill: none; stroke: #393a3b; stroke-width: 5; stroke-linecap: round; }
.dots { fill: none; stroke: #434445; stroke-width: 7; stroke-linecap: round; }
.cutdots { stroke: #191b1c; }
```
